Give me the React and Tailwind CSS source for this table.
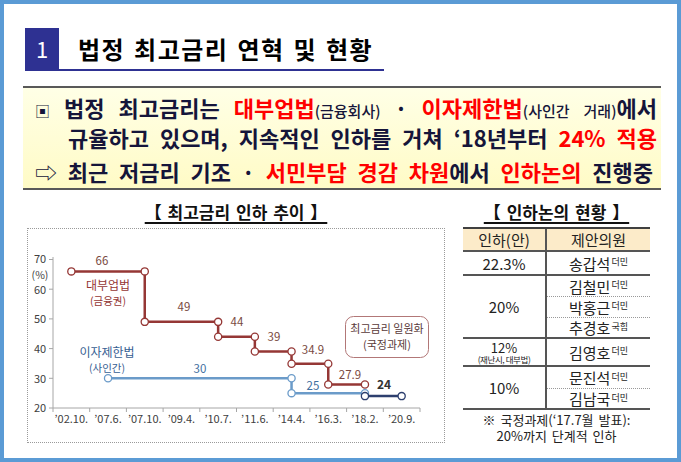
import React from 'react';

const RED = '#953735';
const BLUE = '#6b9bc9';
const NAVY = '#2d3f6e';

const cx = (i) => 25 + 36.7 * (i + 0.5);
const cy = (v) => 179 - (v - 20) * 2.97;

const redPts = [[0, 66], [2, 66], [2, 49], [4, 49], [4, 44], [5, 44], [5, 39], [6, 39], [6, 34.9], [7, 34.9], [7, 27.9], [8, 27.9]];
const bluePts = [[1, 30], [6, 30], [6, 25], [8, 25]];
const navyPts = [[8, 24], [9, 24]];
const xLabels = ['’02.10.', '’07.6.', '’07.10.', '’09.4.', '’10.7.', '’11.6.', '’14.4.', '’16.3.', '’18.2.', '’20.9.'];

const Series = ({ pts, color }) => (
  <g>
    <polyline
      points={pts.map(([i, v]) => `${cx(i)},${cy(v)}`).join(' ')}
      fill="none"
      stroke={color}
      strokeWidth="2.5"
    />
    {pts.map(([i, v], k) => (
      <circle key={k} cx={cx(i)} cy={cy(v)} r="3.6" fill="#fff" stroke={color} strokeWidth="1.3" />
    ))}
  </g>
);

const Chart = () => (
  <div className="w-[418px] h-[215px] border border-dotted border-[#9a9a9a]">
    <svg width="416" height="213" viewBox="0 0 416 213" fontFamily='"Noto Sans CJK KR", "Noto Sans", sans-serif'>
      {/* axes */}
      <line x1="25" y1="28" x2="25" y2="179" stroke="#a6a6a6" strokeWidth="1" />
      <line x1="25" y1="179" x2="392" y2="179" stroke="#a6a6a6" strokeWidth="1" />
      {[20, 30, 40, 50, 60, 70].map((v) => (
        <line key={v} x1="21" y1={cy(v)} x2="25" y2={cy(v)} stroke="#a6a6a6" />
      ))}
      {Array.from({ length: 11 }).map((_, k) => (
        <line key={k} x1={25 + 36.7 * k} y1="179" x2={25 + 36.7 * k} y2="183" stroke="#a6a6a6" />
      ))}
      <g fontSize="11" fill="#404040" textAnchor="middle">
        <text x="12" y="34">70</text>
        <text x="12" y="50" fontSize="10.5">(%)</text>
        <text x="12" y="65">60</text>
        <text x="12" y="94">50</text>
        <text x="12" y="124">40</text>
        <text x="12" y="154">30</text>
        <text x="12" y="183">20</text>
        {xLabels.map((l, i) => (
          <text key={l} x={cx(i)} y="194">{l}</text>
        ))}
      </g>

      <Series pts={redPts} color={RED} />
      <Series pts={bluePts} color={BLUE} />
      <Series pts={navyPts} color={NAVY} />

      <g fontSize="11.5" fill="#7a4a42" textAnchor="middle">
        <text x="74" y="36">66</text>
        <text x="156" y="82">49</text>
        <text x="209" y="97">44</text>
        <text x="246" y="112">39</text>
        <text x="285" y="125">34.9</text>
        <text x="322" y="150">27.9</text>
      </g>
      <text x="356" y="160" fontSize="12" fontWeight="700" fill="#333" textAnchor="middle">24</text>
      <g fontSize="11.5" fill="#3f6f9f" textAnchor="middle">
        <text x="172" y="144">30</text>
        <text x="285" y="161">25</text>
      </g>

      <g fill={RED} textAnchor="middle">
        <text x="80" y="61" fontSize="12">대부업법</text>
        <text x="80" y="76" fontSize="10.5">(금융권)</text>
      </g>
      <g fill="#376092" textAnchor="middle">
        <text x="79" y="128" fontSize="12">이자제한법</text>
        <text x="79" y="143" fontSize="10.5">(사인간)</text>
      </g>

      <rect x="317.5" y="87.5" width="83" height="41" rx="8" fill="#fff" stroke="#b27777" strokeWidth="1" />
      <g fill="#5a3a3a" fontSize="11" textAnchor="middle">
        <text x="359" y="104">최고금리 일원화</text>
        <text x="359" y="120">(국정과제)</text>
      </g>
    </svg>
  </div>
);

const Sup = ({ children }) => <sup className="text-[9px] ml-[1px]">{children}</sup>;

const Name = ({ name, party, className }) => (
  <div className={`col-start-2 flex items-center justify-center ${className}`}>
    <span>
      {name}
      <Sup>{party}</Sup>
    </span>
  </div>
);

const ProposalTable = () => (
  <div className="w-[187px] grid grid-cols-[84px_103px] grid-rows-[23px_24px_21px_21px_21px_28px_22px_21px] border-t-2 border-[#404040] text-[15px] text-[#222] leading-none">
    <div className="col-start-1 row-start-1 bg-[#fcebc9] border-b-2 border-r-2 border-[#555] flex items-center justify-center">인하(안)</div>
    <div className="col-start-2 row-start-1 bg-[#fcebc9] border-b-2 border-[#555] flex items-center justify-center">제안의원</div>

    <div className="col-start-1 row-start-2 border-b-2 border-r-2 border-[#555] flex items-center justify-center">22.3%</div>
    <Name name="송갑석" party="더민" className="row-start-2 border-b-2 border-[#555]" />

    <div className="col-start-1 row-start-3 row-span-3 border-b-2 border-r-2 border-[#555] flex items-center justify-center">20%</div>
    <Name name="김철민" party="더민" className="row-start-3 border-b border-dotted border-[#999]" />
    <Name name="박홍근" party="더민" className="row-start-4 border-b border-dotted border-[#999]" />
    <Name name="추경호" party="국힘" className="row-start-5 border-b-2 border-[#555]" />

    <div className="col-start-1 row-start-6 border-b-2 border-r-2 border-[#555] flex flex-col items-center justify-center">
      <span className="block text-[13px] leading-[13px]">12%</span>
      <span className="block mt-[1px] text-[8.5px] leading-[9px] tracking-tighter">(재난시, 대부법)</span>
    </div>
    <Name name="김영호" party="더민" className="row-start-6 border-b-2 border-[#555]" />

    <div className="col-start-1 row-start-7 row-span-2 border-b-2 border-r-2 border-[#555] flex items-center justify-center">10%</div>
    <Name name="문진석" party="더민" className="row-start-7 border-b border-dotted border-[#999]" />
    <Name name="김남국" party="더민" className="row-start-8 border-b-2 border-[#555]" />
  </div>
);

const SubTitle = ({ children }) => (
  <div className="h-[20px] flex items-center justify-center text-[17px] font-bold text-[#111] underline underline-offset-[3px] decoration-[1.5px] [word-spacing:2px]">
    {children}
  </div>
);

export default function App() {
  return (
    <div className="w-[681px] h-[462px] box-border border-4 border-[#5b9bd5] bg-white font-['Noto_Sans_CJK_KR','Noto_Sans',sans-serif] overflow-hidden">
      {/* header */}
      <div className="pt-[24px] pl-[21px]">
        <div className="flex w-[359px] border-b-2 border-[#2e3192]">
          <div className="w-[34px] h-[41px] bg-[#2e3192] text-white text-[22px] flex items-center justify-center">1</div>
          <div className="pl-[19px] flex items-center text-[24px] font-bold text-black tracking-[1.5px] [word-spacing:2px]">법정 최고금리 연혁 및 현황</div>
        </div>
      </div>

      {/* summary box */}
      <div className="ml-[19px] mt-[15px] w-[638px] border-y-2 border-[#595959] bg-gradient-to-b from-[#ffffe6] to-[#fffbc6] pt-[4px] pb-[2px] text-[22px] font-bold text-[#15153a] leading-[30px]">
        <div className="h-[30px] ml-[12px] w-[622px] flex items-baseline justify-between">
          <span className="text-[15px] font-normal">▣</span>
          <span>법정</span>
          <span>최고금리는</span>
          <span>
            <span className="text-[#ff0000]">대부업법</span>
            <span className="text-[15px] font-medium">(금융회사)</span>
          </span>
          <span>·</span>
          <span>
            <span className="text-[#ff0000]">이자제한법</span>
            <span className="text-[15px] font-medium">(사인간</span>
          </span>
          <span>
            <span className="text-[15px] font-medium">거래)</span>에서
          </span>
        </div>
        <div className="h-[30px] ml-[45px] w-[589px] flex items-baseline justify-between">
          <span>규율하고</span>
          <span>있으며,</span>
          <span>지속적인</span>
          <span>인하를</span>
          <span>거쳐</span>
          <span>‘18년부터</span>
          <span className="text-[#ff0000]">24%</span>
          <span className="text-[#ff0000]">적용</span>
        </div>
        <div className="h-[30px] mt-[4px] ml-[12px] w-[618px] flex items-baseline justify-between">
          <span className="font-normal">⇨</span>
          <span>최근</span>
          <span>저금리</span>
          <span>기조</span>
          <span>·</span>
          <span className="text-[#ff0000]">서민부담</span>
          <span className="text-[#ff0000]">경감</span>
          <span>
            <span className="text-[#ff0000]">차원</span>에서
          </span>
          <span className="text-[#ff0000]">인하논의</span>
          <span>진행중</span>
        </div>
      </div>

      {/* bottom */}
      <div className="flex mt-[12px] ml-[23px]">
        <div className="w-[418px]">
          <SubTitle>【 최고금리 인하 추이 】</SubTitle>
          <div className="mt-[6px]">
            <Chart />
          </div>
        </div>
        <div className="ml-[18px] w-[187px]">
          <SubTitle>【 인하논의 현황 】</SubTitle>
          <div className="mt-[5px]">
            <ProposalTable />
          </div>
          <div className="mt-[2px] text-center text-[13px] leading-[16px] text-[#222] [word-spacing:2px]">
            <div>※ 국정과제(‘17.7월 발표):</div>
            <div>20%까지 단계적 인하</div>
          </div>
        </div>
      </div>
    </div>
  );
}
